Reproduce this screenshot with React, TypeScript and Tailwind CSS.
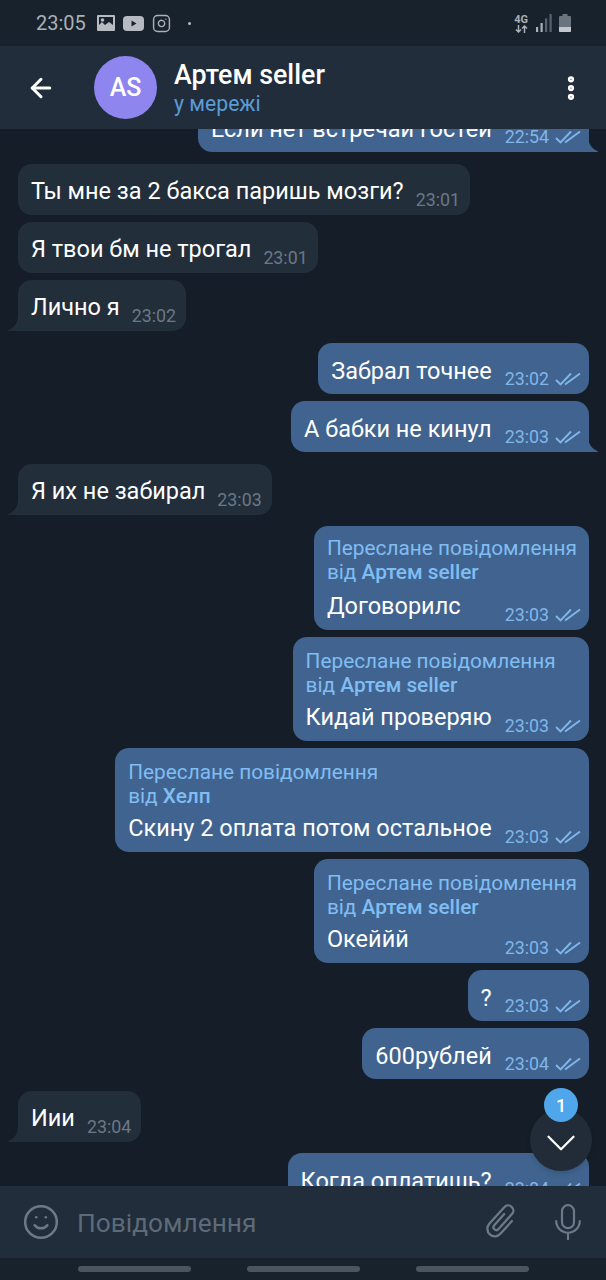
import { ArrowLeft, ChevronDown, Instagram, MoreVertical, Smile } from "lucide-react"
import type { ReactNode } from "react"

function Checks() {
  return (
    <svg viewBox="0 0 26 14" className="w-[26px] h-[14px] ml-[6px] mb-[1px] shrink-0" fill="none" stroke="#80b6ea" strokeWidth="1.900">
      <path d="M1 8l4.500 4.500L16 1.500" />
      <path d="M10 12.500L25 1.500" />
    </svg>
  )
}

function TailLeft() {
  return (
    <svg viewBox="0 0 12 16" className="absolute -left-[10px] bottom-0 w-[12px] h-[16px]" fill="#222e3a">
      <path d="M10 0C10 8 6 13 0 15.300Q0 16 1 16H12V0Z" />
    </svg>
  )
}

function TailRight() {
  return (
    <svg viewBox="0 0 12 16" className="absolute -right-[9px] bottom-0 w-[12px] h-[16px]" fill="#40648f">
      <path d="M2 0C2 8 6 13 12 15.300Q12 16 11 16H0V0Z" />
    </svg>
  )
}

function In({ text, time, tail, mt = "mt-[7px]" }: { text: string; time: string; tail?: boolean; mt?: string }) {
  return (
    <div className={`relative self-start ml-[18px] h-[51px] bg-[#222e3a] rounded-[14px] pl-[13px] pr-[10px] flex items-start ${tail ? "rounded-bl-none" : ""} ${mt}`}>
      <span className="text-[23.500px] leading-[26px] text-white mt-[14px]">{text}</span>
      <span className="text-[17.800px] leading-[20px] text-[#6a7886] ml-[12px] mt-[26px]">{time}</span>
      {tail && <TailLeft />}
    </div>
  )
}

function Out({ text, time, tail, mt = "mt-[7px]", fwd, tight }: { text: ReactNode; time: string; tail?: boolean; mt?: string; fwd?: string; tight?: boolean }) {
  return (
    <div className={`relative self-end mr-[17px] bg-[#40648f] rounded-[14px] pl-[13px] pr-[8px] ${tail ? "rounded-br-none" : ""} ${mt} ${fwd ? (tight ? "h-[104px] pt-[10px]" : "h-[104px] pt-[12px]") : "h-[51px] pt-[15px]"}`}>
      {fwd && (
        <div className="text-[20.800px] leading-[24px] text-[#80bdf3] pr-[4px] whitespace-nowrap">
          <div>Переслане повідомлення</div>
          <div>
            від <span className="font-medium">{fwd}</span>
          </div>
        </div>
      )}
      <div className={`flex items-end justify-between ${fwd ? (tight ? "mt-[9px]" : "mt-[7px]") : ""}`}>
        <span className="text-[23.500px] leading-[26px] text-white">{text}</span>
        <span className={`flex items-center ml-[13px] relative ${fwd ? "top-[6px]" : "top-[5px]"}`}>
          <span className="text-[17.800px] leading-[20px] text-[#80b6ea]">{time}</span>
          <Checks />
        </span>
      </div>
      {tail && <TailRight />}
    </div>
  )
}

export default function App() {
  return (
    <div className="w-[606px] h-[1280px] flex flex-col overflow-hidden bg-[#151e28] font-['Roboto',sans-serif]">
      {/* status bar */}
      <div className="h-[46px] shrink-0 flex items-center pl-[36px] pr-[35px] bg-[#18222d] text-[#a9b0b7]">
        <span className="text-[20px] leading-none">23:05</span>
        <svg viewBox="0 0 18 16" className="w-[18px] h-[16px] ml-[11px]">
          <path fill="#b5bbc1" fillRule="evenodd" d="M1 0h16a1 1 0 011 1v14a1 1 0 01-1 1H1a1 1 0 01-1-1V1a1 1 0 011-1zM2 2v8l3-3 3 3 4-3 4 3V2z" />
          <circle cx="5.500" cy="5" r="1.800" fill="#b5bbc1" />
        </svg>
        <svg viewBox="0 0 21 15" className="w-[21px] h-[15px] ml-[8px]">
          <rect width="21" height="15" rx="4" fill="#b5bbc1" />
          <path d="M8.500 4.500l5 3-5 3z" fill="#18222d" />
        </svg>
        <Instagram className="w-[19px] h-[19px] ml-[8px]" strokeWidth={1.800} />
        <span className="w-[3px] h-[3px] rounded-full bg-[#b5bbc1] ml-[17px]" />
        <div className="ml-auto flex items-center">
          <div className="flex flex-col items-center text-[11px] leading-[11px] font-bold">
            <span>4G</span>
            <svg viewBox="0 0 13 8" className="w-[13px] h-[8px]" fill="none" stroke="#a9b0b7" strokeWidth="1.500">
              <path d="M3.500 0v7M1 4.500l2.500 2.500L6 4.500M9.500 8V1M7 3.500L9.500 1 12 3.500" />
            </svg>
          </div>
          <svg viewBox="0 0 16 18" className="w-[16px] h-[18px] ml-[8px]" fill="#56626e">
            <rect x="0" y="13" width="2.200" height="5" fill="#a9b0b7" />
            <rect x="4.500" y="9" width="2.200" height="9" fill="#a9b0b7" />
            <rect x="9" y="4.500" width="2.200" height="13.500" />
            <rect x="13.500" y="0" width="2.200" height="18" />
          </svg>
          <svg viewBox="0 0 12 18" className="w-[12px] h-[18px] ml-[7px]">
            <path d="M3.500 0h5v2H11a1 1 0 011 1v14a1 1 0 01-1 1H1a1 1 0 01-1-1V3a1 1 0 011-1h2.500z" fill="#69747f" />
            <path d="M0 13h12v4a1 1 0 01-1 1H1a1 1 0 01-1-1z" fill="#c3c8cd" />
          </svg>
        </div>
      </div>

      {/* header */}
      <div className="h-[83px] shrink-0 flex items-center bg-[#212d3b] pl-[26px] pr-[20px] z-10">
        <ArrowLeft className="w-[30px] h-[30px] text-white" strokeWidth={2.400} />
        <div className="w-[63px] h-[63px] rounded-full bg-[#8e85ee] ml-[38px] flex items-center justify-center text-white text-[25px] font-medium">AS</div>
        <div className="ml-[17px] flex flex-col pt-[2px]">
          <span className="text-[26.800px] leading-[30px] font-medium text-white">Артем seller</span>
          <span className="text-[21.200px] leading-[27px] text-[#5b9bd6]">у мережі</span>
        </div>
        <MoreVertical className="w-[30px] h-[30px] ml-auto text-white" strokeWidth={3} />
      </div>

      {/* messages */}
      <div className="relative flex-1 min-h-0 overflow-hidden">
        <div className="flex flex-col">
          <div className="-mt-[35px] flex flex-col">
            <Out text="Если нет встречай гостей" time="22:54" tail />
          </div>
          <In text="Ты мне за 2 бакса паришь мозги?" time="23:01" mt="mt-[12px]" />
          <In text="Я твои бм не трогал" time="23:01" />
          <In text="Лично я" time="23:02" tail />
          <Out text="Забрал точнее" time="23:02" mt="mt-[12px]" />
          <Out text="А бабки не кинул" time="23:03" tail />
          <In text="Я их не забирал" time="23:03" tail mt="mt-[12px]" />
          <Out text="Договорилс" time="23:03" fwd="Артем seller" mt="mt-[11px]" tight />
          <Out text="Кидай проверяю" time="23:03" fwd="Артем seller" />
          <Out text="Скину 2 оплата потом остальное" time="23:03" fwd="Хелп" />
          <Out text="Океййй" time="23:03" fwd="Артем seller" />
          <Out text="?" time="23:03" />
          <Out text="600рублей" time="23:04" />
          <In text="Иии" time="23:04" tail mt="mt-[12px]" />
          <Out text="Когда оплатишь?" time="23:04" mt="mt-[11px]" />
        </div>

        <div className="absolute right-[14px] bottom-[15px] w-[62px] h-[62px] rounded-full bg-[#222c38] flex items-center justify-center shadow-md">
          <ChevronDown className="w-[50px] h-[50px] text-white relative top-[3px]" strokeWidth={1.100} />
        </div>
        <div className="absolute right-[28px] bottom-[64px] w-[34px] h-[34px] rounded-full bg-[#4fa6ea] flex items-center justify-center text-white text-[18px] font-medium">1</div>
      </div>

      {/* input */}
      <div className="h-[72px] shrink-0 flex items-center bg-[#212d3b] pl-[22px] pr-[25px] z-10">
        <Smile className="w-[38px] h-[38px] text-[#6b7a88]" strokeWidth={1.600} />
        <span className="ml-[17px] text-[26.300px] leading-[36px] text-[#5d6b78] relative top-[1px]">Повідомлення</span>
        <svg viewBox="0 0 40 40" className="w-[46px] h-[46px] ml-auto" fill="none" stroke="#6b7a88" strokeWidth="2" strokeLinecap="round">
          <path transform="rotate(42 20 20)" d="M26.500 13V28a6.500 6.500 0 01-13 0V8.500a4.500 4.500 0 019 0V26a2.500 2.500 0 01-5 0V13" />
        </svg>
        <svg viewBox="0 0 26 36" className="w-[26px] h-[36px] ml-[31px]" fill="none" stroke="#6b7a88" strokeWidth="2.200" strokeLinecap="round">
          <rect x="7" y="1.200" width="12" height="23" rx="6" />
          <path d="M1.200 17a11.800 11.800 0 0023.600 0M13 29v6" />
        </svg>
      </div>

      {/* nav */}
      <div className="h-[22px] shrink-0 flex items-center justify-center gap-[56px] bg-[#18222d]">
        <div className="w-[113px] h-[6px] rounded-full bg-[#4a5560]" />
        <div className="w-[113px] h-[6px] rounded-full bg-[#4a5560]" />
        <div className="w-[113px] h-[6px] rounded-full bg-[#4a5560]" />
      </div>
    </div>
  )
}
